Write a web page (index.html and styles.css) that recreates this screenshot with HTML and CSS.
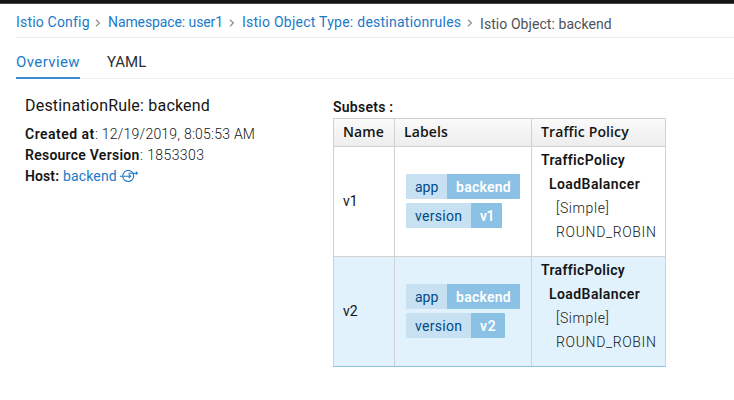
FILE: index.html
```html
<!DOCTYPE html>
<html lang="en">
<head>
<meta charset="utf-8">
<title>Istio Config</title>
<link rel="stylesheet" href="styles.css">
</head>
<body>
<div class="masthead"></div>
<nav class="breadcrumb">
  <a class="crumb-config">Istio Config</a>
  <svg class="sep" viewBox="0 0 6 8"><path d="M1 .8 4.4 4 1 7.2"/></svg>
  <a class="crumb-namespace">Namespace: user1</a>
  <svg class="sep" viewBox="0 0 6 8"><path d="M1 .8 4.4 4 1 7.2"/></svg>
  <a class="crumb-type">Istio Object Type: destinationrules</a>
  <svg class="sep" viewBox="0 0 6 8"><path d="M1 .8 4.4 4 1 7.2"/></svg>
  <span class="crumb-object">Istio Object: backend</span>
</nav>
<div class="tabs">
  <a class="tab active">Overview</a>
  <a class="tab yaml">YAML</a>
</div>
<main class="content">
  <section class="details">
    <h1>DestinationRule: backend</h1>
    <div class="row"><b class="k-created">Created at</b><span class="v-created">: 12/19/2019, 8:05:53 AM</span></div>
    <div class="row"><b class="k-version">Resource Version</b><span class="v-version">: 1853303</span></div>
    <div class="row"><b class="k-host">Host:</b><a class="host">backend</a><svg class="service" viewBox="0 0 19 12"><circle cx="8.2" cy="6" r="5.5"/><path d="M0 6.2H10.6M8.7 4.3 10.6 6.2 8.7 8.1M8.5 3.2H17.3M15.8 1.7 17.4 3.2 15.8 4.7"/></svg></div>
  </section>
  <section class="subsets">
    <b class="subsets-title">Subsets :</b>
    <table>
      <colgroup><col class="c-name"><col class="c-labels"><col class="c-policy"></colgroup>
      <thead><tr><th>Name</th><th>Labels</th><th>Traffic Policy</th></tr></thead>
      <tbody>
        <tr>
          <td>v1</td>
          <td class="labels">
            <div class="label"><span class="key">app</span><b class="value service-name">backend</b></div>
            <div class="label"><span class="key version">version</span><b class="value narrow">v1</b></div>
          </td>
          <td class="policy"><b>TrafficPolicy</b><b class="level-1">LoadBalancer</b><span class="simple">[Simple]</span><span class="robin">ROUND_ROBIN</span></td>
        </tr>
        <tr class="selected">
          <td>v2</td>
          <td class="labels">
            <div class="label"><span class="key">app</span><b class="value service-name">backend</b></div>
            <div class="label"><span class="key version">version</span><b class="value wide">v2</b></div>
          </td>
          <td class="policy"><b>TrafficPolicy</b><b class="level-1">LoadBalancer</b><span class="simple">[Simple]</span><span class="robin">ROUND_ROBIN</span></td>
        </tr>
      </tbody>
    </table>
  </section>
</main>
</body>
</html>
```
FILE: styles.css
```css
* { box-sizing: border-box; }
body {
  margin: 0;
  height: 400px;
  overflow: hidden;
  background: #fff;
  color: #151515;
  font: 14px/21px Roboto, "Liberation Sans", sans-serif;
}
a { color: #1b7ac9; }
b { font-weight: 600; }
.masthead { height: 4px; background: #151515; border-bottom: 1px solid #444; }
.breadcrumb {
  display: flex;
  height: 34px;
  margin-left: 16px;
  padding-top: 8px;
  border-bottom: 1px solid #ededed;
  white-space: nowrap;
}
.sep { width: 6px; height: 8px; margin: 7px 7px 0 6px; fill: none; stroke: #8b8d8f; stroke-width: 1.2; flex: none; }
.crumb-config { width: 73px; letter-spacing: .19px; }
.crumb-namespace { width: 115px; letter-spacing: -.1px; }
.crumb-type { width: 219px; letter-spacing: .25px; }
.crumb-object { color: #4d5258; padding-top: 2px; letter-spacing: .07px; }
.tabs { display: flex; height: 41px; margin-left: 16px; border-bottom: 1px solid #ededed; }
.tab { height: 41px; padding-top: 14px; font-size: 15px; }
.active { width: 64px; border-bottom: 2px solid #398bd3; letter-spacing: .4px; }
.yaml { margin-left: 27px; color: #292e34; }
.content { display: flex; }
.details { width: 333px; padding: 16px 0 0 25px; }
h1 { margin: 0 0 8px; font-size: 16px; line-height: 21px; font-weight: 400; letter-spacing: .2px; }
.row { display: flex; align-items: flex-start; height: 21px; white-space: nowrap; }
.k-created { width: 70px; letter-spacing: .48px; }
.v-created { letter-spacing: .23px; font-weight: 300; }
.k-version { width: 115px; letter-spacing: .25px; }
.v-version { letter-spacing: .4px; font-weight: 300; }
.k-host { width: 34px; letter-spacing: .1px; }
.host { width: 54px; margin-left: 4px; letter-spacing: .15px; }
.service { width: 19px; height: 12px; margin: 4px 0 0 3px; fill: none; stroke: #1b7ac9; stroke-width: 1.1; }
.subsets { width: 333px; padding-top: 18px; }
.subsets-title { display: block; height: 21px; letter-spacing: .25px; }
table { width: 333px; table-layout: fixed; border-collapse: collapse; border: 1px solid #d1d1d1; }
.c-name { width: 61px; }
.c-labels { width: 137px; }
.c-policy { width: 134px; }
th, td { padding: 0 9px; border: 1px solid #d1d1d1; text-align: left; }
th { height: 28px; padding-bottom: 2px; font: 600 14px/20px "Open Sans", sans-serif; letter-spacing: .12px; white-space: nowrap; }
thead { background: linear-gradient(#fafafa, #ededed); }
td { height: 110px; }
.labels { padding: 0 11px 2px; }
.label { display: flex; width: max-content; height: 25px; line-height: 26px; border-radius: 1px; overflow: hidden; }
.label + .label { margin-top: 4px; }
.key { width: 41px; padding: 0 9px; background: #c7e0f2; color: #004a87; }
.version { width: 65px; letter-spacing: .3px; }
.value { padding: 0 8px 0 9px; background: #8bc1e5; color: #fff; letter-spacing: .25px; }
.service-name { width: 73px; }
.narrow { width: 31px; letter-spacing: -.6px; }
.wide { width: 34px; letter-spacing: .8px; }
.policy { vertical-align: top; padding-top: 1px; line-height: 24px; }
.policy > * { display: block; letter-spacing: .34px; }
.policy > .level-1 { margin-left: 8px; letter-spacing: .42px; }
.simple, .robin { margin-left: 15px; white-space: nowrap; font-weight: 300; }
.policy > .simple { letter-spacing: .6px; }
.policy > .robin { letter-spacing: .65px; }
.selected { background: #e1f2fd; }
.selected td { border-bottom-color: #8cc3e7; }
```
